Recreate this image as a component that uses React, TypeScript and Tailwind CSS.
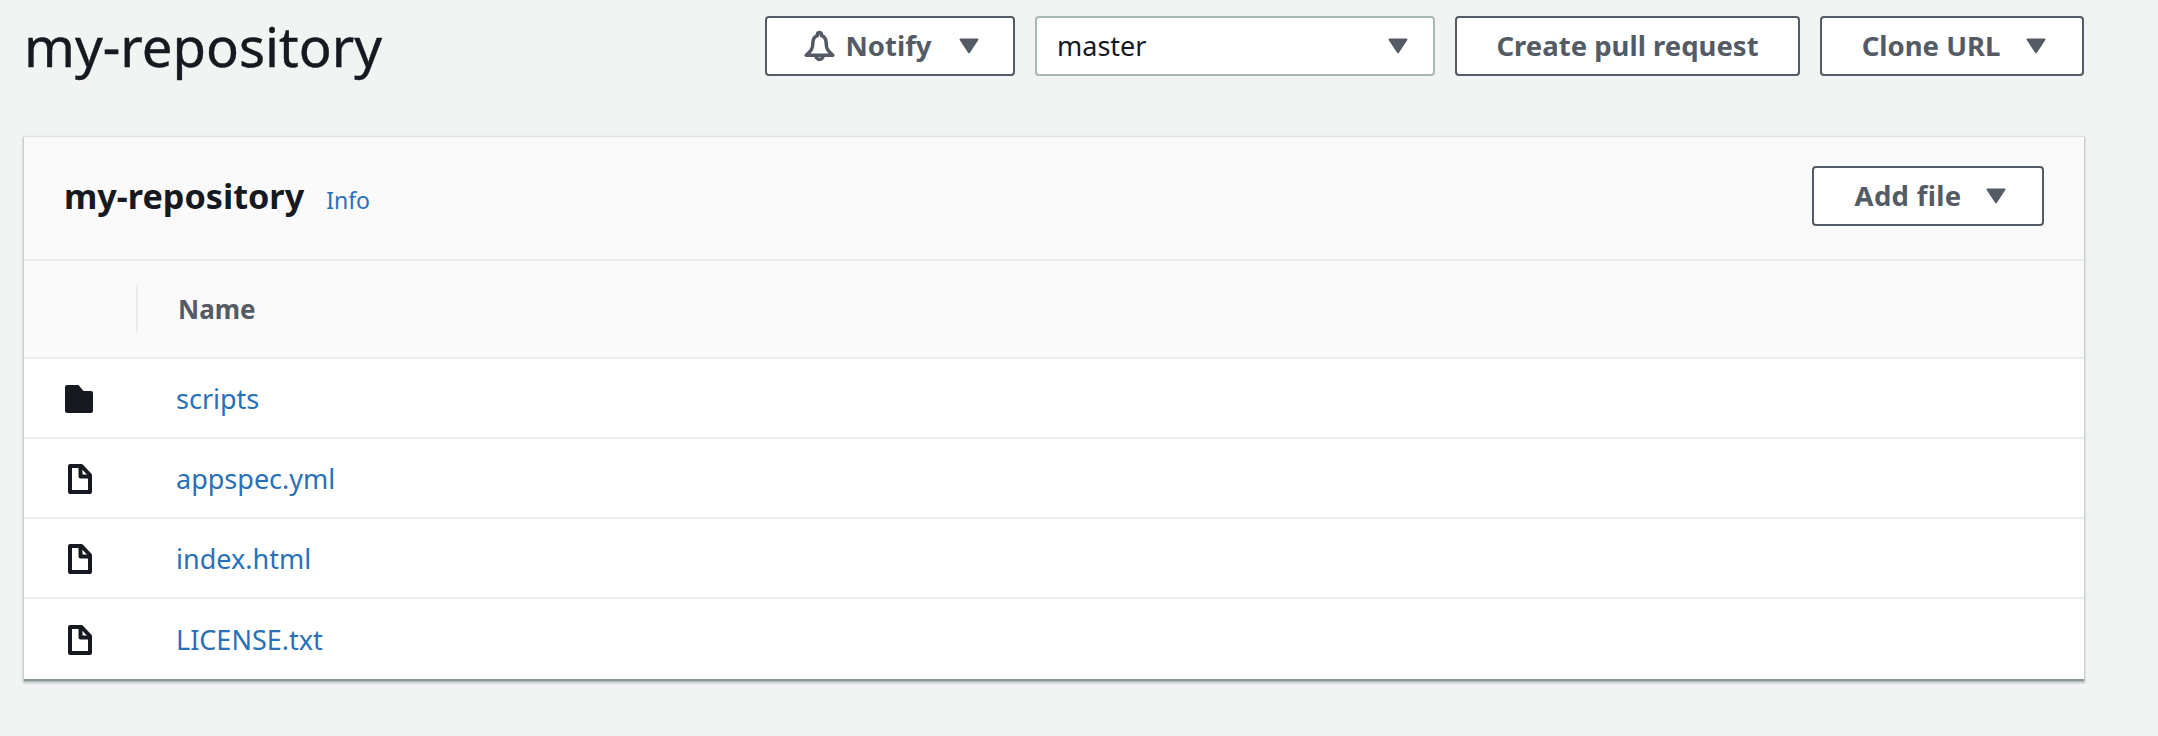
const CaretDown = () => (
  <svg viewBox="0 0 20 16" className="h-[16px] w-[20px] fill-[#545b64]">
    <path d="M1.5 0.5h17a1 1 0 0 1 .8 1.6l-8.4 12.6a1.1 1.1 0 0 1-1.8 0L.7 2.1A1 1 0 0 1 1.5.5z" />
  </svg>
);

const BellIcon = () => (
  <svg viewBox="0 0 32 32" fill="none" className="h-[33px] w-[33px] stroke-[#545b64]" strokeWidth="3.4" strokeLinejoin="round" strokeLinecap="round">
    <path d="M16 2.500c-1.300 0-2 .9-2 2v1C10.800 6.500 9.500 9.500 9.500 13c0 5-1.500 7.500-6.500 11.500h26c-5-4-6.500-6.500-6.500-11.500 0-3.500-1.300-6.500-4.500-7.500v-1c0-1.100-.7-2-2-2z" />
    <path d="M12.500 25a3.500 3.500 0 0 0 7 0" />
  </svg>
);

const FolderIcon = () => (
  <svg viewBox="0 0 28 28" className="h-[28px] w-[28px] fill-[#16191f]">
    <path d="M0 2a2 2 0 0 1 2-2h11.500l5 6H26a2 2 0 0 1 2 2v18a2 2 0 0 1-2 2H2a2 2 0 0 1-2-2z" />
  </svg>
);

const FileIcon = () => (
  <svg viewBox="0 0 28 32" fill="none" className="h-[32px] w-[28px] stroke-[#16191f]" strokeWidth="4" strokeLinejoin="round">
    <path d="M5 3h11.500l8.500 9v17H5z" />
    <path d="M15.500 3v10.500h9.500" />
  </svg>
);

const Button = ({ children, className }: { children: React.ReactNode; className: string }) => (
  <button className={`flex h-[60px] items-center justify-center rounded-[4px] border-2 border-[#545b64] bg-white text-[27.5px] font-bold text-[#545b64] ${className}`}>
    {children}
  </button>
);

const files = ['appspec.yml', 'index.html', 'LICENSE.txt'];

export default function App() {
  return (
    <div className="min-h-[736px] bg-[#f2f3f3] px-6 pt-4 font-['Noto_Sans',sans-serif]">
      <div className="flex h-[60px] items-center">
        <h1 className="flex-1 text-[54.5px] leading-[60px] text-[#16191f] [-webkit-text-stroke:0.4px_#16191f]">my-repository</h1>
        <div className="mr-[50px] flex gap-[20px]">
          <Button className="w-[250px] gap-[9px] pl-[2px]">
            <BellIcon />
            <span className="mr-[18px]">Notify</span>
            <CaretDown />
          </Button>
          <div className="flex h-[60px] w-[400px] items-center justify-between rounded-[4px] border-2 border-[#aab7b8] bg-white pl-[20px] pr-[25px] text-[27px] text-[#16191f]">
            <span>master</span>
            <CaretDown />
          </div>
          <Button className="w-[345px]">Create pull request</Button>
          <Button className="w-[264px] gap-[26px] pl-[4px]">
            <span>Clone URL</span>
            <CaretDown />
          </Button>
        </div>
      </div>

      <div className="mt-[61px] mr-[50px] border-b-2 border-[#879596] bg-white shadow-[0_1px_2px_1px_rgba(0,28,36,0.25)]">
        <div className="flex h-[124px] items-center justify-between border-b-2 border-[#eaeded] bg-[#fafafa] pb-[4px] pl-10 pr-10">
          <div className="flex items-baseline gap-[22px]">
            <h2 className="text-[34.2px] font-bold text-[#16191f]">my-repository</h2>
            <a className="text-[23px] text-[#2a70b8]">Info</a>
          </div>
          <Button className="w-[232px] gap-[25px] pl-[5px] tracking-[0.3px]">
            <span>Add file</span>
            <CaretDown />
          </Button>
        </div>

        <div className="flex h-[98px] items-center border-b-2 border-[#eaeded] bg-[#fafafa]">
          <div className="h-[48px] w-[114px] border-r-2 border-[#eaeded]" />
          <span className="pl-10 text-[26px] font-bold text-[#545b64]">Name</span>
        </div>

        <div className="flex h-[80px] items-center border-b-2 border-[#eaeded] pt-[2px]">
          <div className="flex w-[152px] pl-[41px]">
            <FolderIcon />
          </div>
          <a className="text-[27px] text-[#2a70b8]">scripts</a>
        </div>

        {files.map((file, i) => (
          <div key={file} className={`flex h-[80px] items-center pt-[2px] ${i < files.length - 1 ? 'border-b-2 border-[#eaeded]' : ''}`}>
            <div className="flex w-[152px] pl-[41px]">
              <FileIcon />
            </div>
            <a className="text-[27px] text-[#2a70b8]">{file}</a>
          </div>
        ))}
      </div>
    </div>
  );
}
